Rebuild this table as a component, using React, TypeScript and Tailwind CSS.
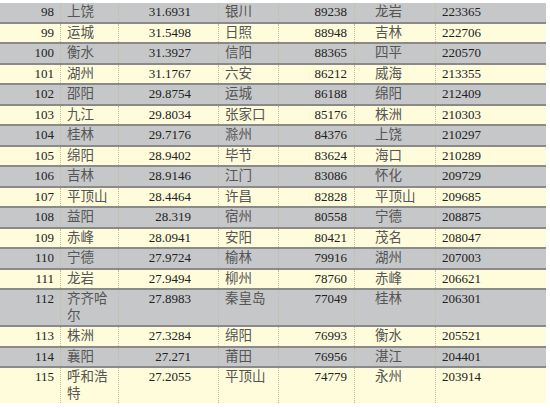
import React from 'react';

const rows: [string, string, string, string, string, string, string][] = [
  ['98', '上饶', '31.6931', '银川', '89238', '龙岩', '223365'],
  ['99', '运城', '31.5498', '日照', '88948', '吉林', '222706'],
  ['100', '衡水', '31.3927', '信阳', '88365', '四平', '220570'],
  ['101', '湖州', '31.1767', '六安', '86212', '威海', '213355'],
  ['102', '邵阳', '29.8754', '运城', '86188', '绵阳', '212409'],
  ['103', '九江', '29.8034', '张家口', '85176', '株洲', '210303'],
  ['104', '桂林', '29.7176', '滁州', '84376', '上饶', '210297'],
  ['105', '绵阳', '28.9402', '毕节', '83624', '海口', '210289'],
  ['106', '吉林', '28.9146', '江门', '83086', '怀化', '209729'],
  ['107', '平顶山', '28.4464', '许昌', '82828', '平顶山', '209685'],
  ['108', '益阳', '28.319', '宿州', '80558', '宁德', '208875'],
  ['109', '赤峰', '28.0941', '安阳', '80421', '茂名', '208047'],
  ['110', '宁德', '27.9724', '榆林', '79916', '湖州', '207003'],
  ['111', '龙岩', '27.9494', '柳州', '78760', '赤峰', '206621'],
  ['112', '齐齐哈尔', '27.8983', '秦皇岛', '77049', '桂林', '206301'],
  ['113', '株洲', '27.3284', '绵阳', '76993', '衡水', '205521'],
  ['114', '襄阳', '27.271', '莆田', '76956', '湛江', '204401'],
  ['115', '呼和浩特', '27.2055', '平顶山', '74779', '永州', '203914'],
];

const cell = 'py-[1px] border-l border-dotted border-[#c2bc9c]';
const city = 'text-[13.5px] text-[#555]';

function App() {
  return (
    <div
      className="w-[550px] h-[408px] bg-white pt-[3px] text-[13px] leading-[16.5px] text-[#222]"
      style={{ fontFamily: '"Liberation Serif", "Noto Sans CJK SC", serif' }}
    >
      <div className="w-[546px] divide-y-2 divide-[#8a8a8a]">
        {rows.map((r, i) => (
          <div
            key={r[0]}
            className={`grid grid-cols-[60px_58px_100px_60px_76px_81px_111px] ${
              i % 2 === 0 ? 'bg-[#c6c7c9]' : 'bg-[#fefcdb]'
            }`}
          >
            <div className="py-[1px] pr-[6px] text-right">{r[0]}</div>
            <div className={`${cell} ${city} pl-[6px] pr-[3px]`}>{r[1]}</div>
            <div className={`${cell} pr-[27px] text-right`}>{r[2]}</div>
            <div className={`${cell} ${city} pl-[6px]`}>{r[3]}</div>
            <div className={`${cell} pr-[7px] text-right`}>{r[4]}</div>
            <div className={`${cell} ${city} pl-[20px]`}>{r[5]}</div>
            <div className={`${cell} pl-[6px]`}>{r[6]}</div>
          </div>
        ))}
      </div>
    </div>
  );
}

export default App;
